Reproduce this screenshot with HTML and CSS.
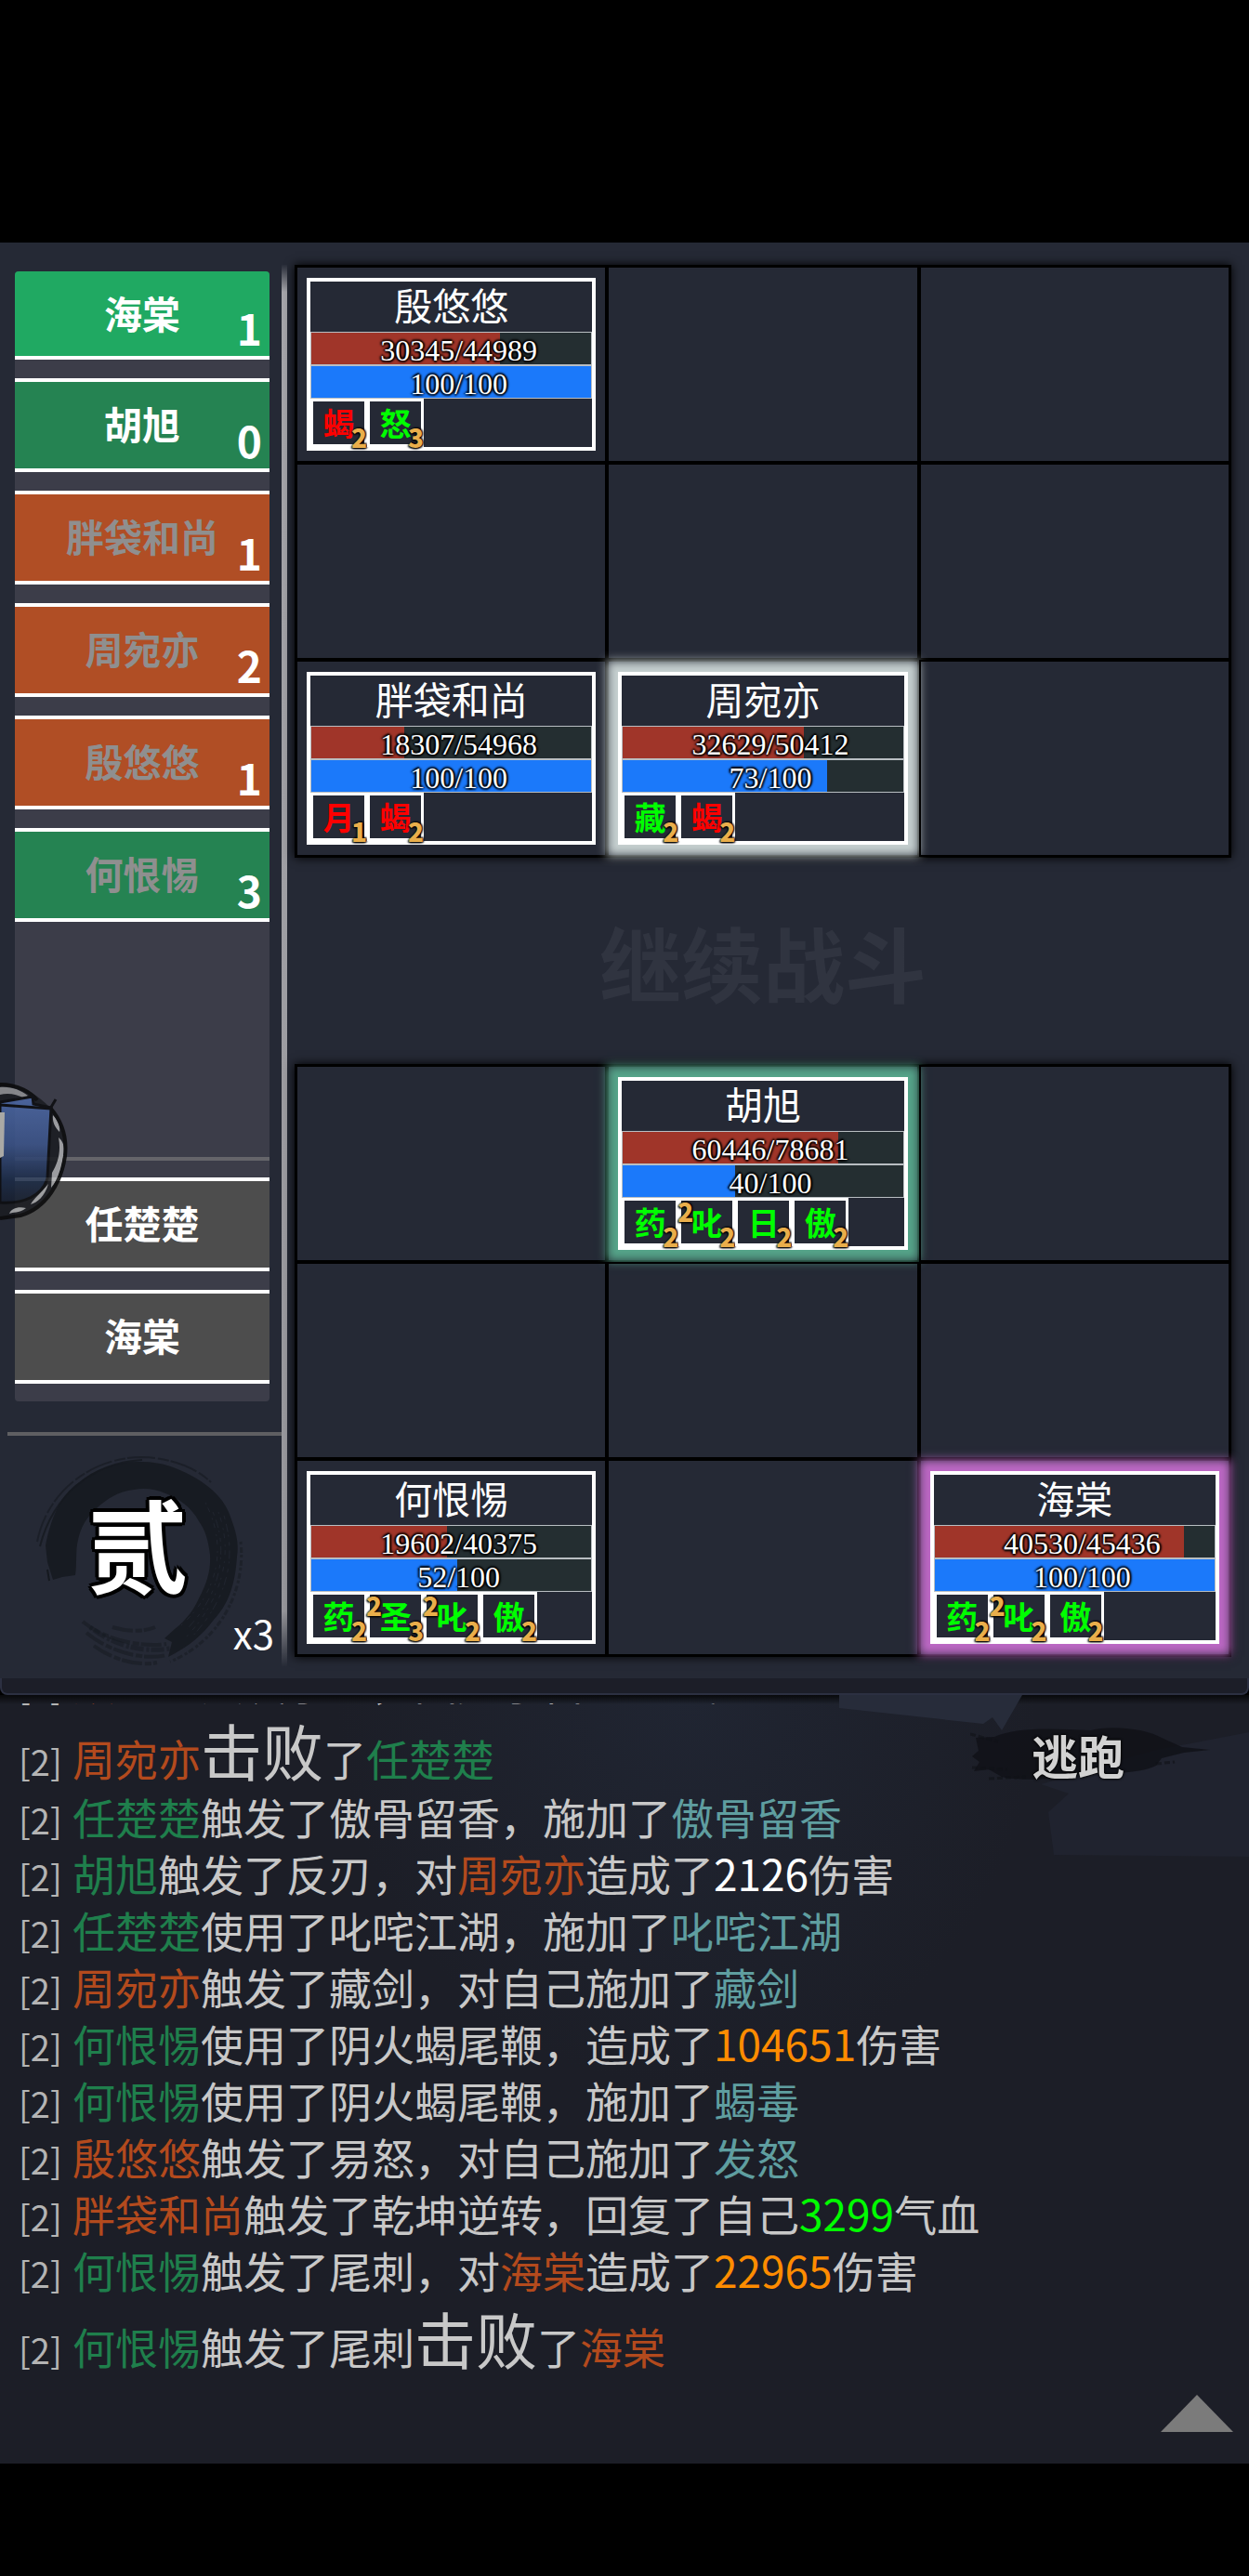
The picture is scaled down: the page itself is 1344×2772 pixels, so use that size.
FILE: index.html
```html
<!DOCTYPE html>
<html lang="zh-CN">
<head>
    <meta charset="UTF-8">
    <meta name="viewport" content="width=device-width, initial-scale=1.0">
    <title>战斗</title>
    <link rel="stylesheet" href="styles.css">
</head>
<body>

<main class="game">
    <section class="battle">
        <aside class="sidebar">
            <div class="queue">
                <div class="turn ally current">海棠<span class="turn-count">1</span></div>
                <div class="turn ally ready">胡旭<span class="turn-count">0</span></div>
                <div class="turn enemy">胖袋和尚<span class="turn-count">1</span></div>
                <div class="turn enemy">周宛亦<span class="turn-count">2</span></div>
                <div class="turn enemy">殷悠悠<span class="turn-count">1</span></div>
                <div class="turn ally">何恨惕<span class="turn-count">3</span></div>
                <div class="fallen">
                    <div class="turn dead">任楚楚</div>
                    <div class="turn dead">海棠</div>
                </div>
            </div>
            <div class="round">
                <svg class="round-ink" viewBox="0 0 226 226" fill="none" stroke="#15191f" aria-hidden="true">
                    <path d="M20 133 L14 114 L12 96 C18 66 28 42 47 29 C64 14 88 6 111 6 C134 5 154 12 171 22 C192 34 206 48 212 68 C218 84 220 96 218 108 C216 140 208 160 193 176 C180 194 164 206 144 216 L148 200 L140 196 L151 186 C164 176 172 164 177 153 C186 136 190 122 189 106 C187 90 184 80 177 70 C168 54 156 46 141 40 C130 35 118 34 107 36 C90 38 78 46 67 56 C56 66 50 76 47 90 C44 102 46 116 44 128 L30 130 Z" fill="#15191f" stroke="none" opacity=".85"/>
                    <path d="M3 92 C14 36 64 1 116 1 C150 2 176 14 190 28" stroke-width="2" stroke-dasharray="30 3 12 2" opacity=".6"/>
                    <path d="M6 97 C20 42 62 7 116 4" stroke-width="2" opacity=".8"/>
                    <path d="M14 122 L16 134" stroke-width="2"/>
                    <path d="M222 92 C228 146 198 200 146 221" stroke-width="3" stroke-dasharray="3 3 6 2" opacity=".5"/>
                    <path d="M192 60 C210 100 200 150 164 186 M204 64 C218 110 208 154 168 196" stroke="#252935" stroke-width="1" stroke-dasharray="4 5 9 3 2 6" opacity=".7"/>
                    <path d="M198 60 C214 104 204 152 162 196 M184 50 C206 92 202 142 158 182" stroke="#252935" stroke-width="1" stroke-dasharray="2 4 5 7" opacity=".7"/>
                    <path d="M56 190 C80 210 116 220 142 214 M52 178 C76 198 116 206 142 202 M64 204 C86 220 112 226 132 222 M84 184 C104 190 120 188 130 184" stroke-width="4" stroke-dasharray="22 3 7 2" opacity=".5"/>
                    <path d="M60 184 C84 203 116 212 146 207" stroke-width="5" stroke-dasharray="3 2 14 3" opacity=".45"/>
                </svg>
                <span class="round-name">贰</span>
                <span class="round-speed">x3</span>
            </div>
        </aside>

        <div class="board">
            <div class="field">
                <div class="cell">
                    <article class="unit">
                        <h2 class="unit-name">殷悠悠</h2>
                        <div class="bar hp"><i class="fill" style="width: 67.4%"></i><span>30345/44989</span></div>
                        <div class="bar mp"><i class="fill" style="width: 100%"></i><span>100/100</span></div>
                        <div class="buffs">
                            <div class="buff bad">蝎<b class="stack">2</b></div>
                            <div class="buff">怒<b class="stack">3</b></div>
                        </div>
                    </article>
                </div>
                <div class="cell"></div>
                <div class="cell"></div>
                <div class="cell"></div>
                <div class="cell"></div>
                <div class="cell"></div>
                <div class="cell">
                    <article class="unit">
                        <h2 class="unit-name">胖袋和尚</h2>
                        <div class="bar hp"><i class="fill" style="width: 33.3%"></i><span>18307/54968</span></div>
                        <div class="bar mp"><i class="fill" style="width: 100%"></i><span>100/100</span></div>
                        <div class="buffs">
                            <div class="buff bad">月<b class="stack">1</b></div>
                            <div class="buff bad">蝎<b class="stack">2</b></div>
                        </div>
                    </article>
                </div>
                <div class="cell">
                    <article class="unit glow-white">
                        <h2 class="unit-name">周宛亦</h2>
                        <div class="bar hp"><i class="fill" style="width: 64.7%"></i><span>32629/50412</span></div>
                        <div class="bar mp"><i class="fill" style="width: 73%"></i><span>73/100</span></div>
                        <div class="buffs">
                            <div class="buff">藏<b class="stack">2</b></div>
                            <div class="buff bad">蝎<b class="stack">2</b></div>
                        </div>
                    </article>
                </div>
                <div class="cell"></div>
            </div>

            <button class="continue" type="button">继续战斗</button>

            <div class="field">
                <div class="cell"></div>
                <div class="cell">
                    <article class="unit glow-green">
                        <h2 class="unit-name">胡旭</h2>
                        <div class="bar hp"><i class="fill" style="width: 76.8%"></i><span>60446/78681</span></div>
                        <div class="bar mp"><i class="fill" style="width: 40%"></i><span>40/100</span></div>
                        <div class="buffs">
                            <div class="buff">药<b class="stack">2</b></div>
                            <div class="buff"><b class="level">2</b>叱<b class="stack">2</b></div>
                            <div class="buff">日<b class="stack">2</b></div>
                            <div class="buff">傲<b class="stack">2</b></div>
                        </div>
                    </article>
                </div>
                <div class="cell"></div>
                <div class="cell"></div>
                <div class="cell"></div>
                <div class="cell"></div>
                <div class="cell">
                    <article class="unit">
                        <h2 class="unit-name">何恨惕</h2>
                        <div class="bar hp"><i class="fill" style="width: 48.5%"></i><span>19602/40375</span></div>
                        <div class="bar mp"><i class="fill" style="width: 52%"></i><span>52/100</span></div>
                        <div class="buffs">
                            <div class="buff">药<b class="stack">2</b></div>
                            <div class="buff"><b class="level">2</b>圣<b class="stack">3</b></div>
                            <div class="buff"><b class="level">2</b>叱<b class="stack">2</b></div>
                            <div class="buff">傲<b class="stack">2</b></div>
                        </div>
                    </article>
                </div>
                <div class="cell"></div>
                <div class="cell">
                    <article class="unit glow-pink">
                        <h2 class="unit-name">海棠</h2>
                        <div class="bar hp"><i class="fill" style="width: 89.2%"></i><span>40530/45436</span></div>
                        <div class="bar mp"><i class="fill" style="width: 100%"></i><span>100/100</span></div>
                        <div class="buffs">
                            <div class="buff">药<b class="stack">2</b></div>
                            <div class="buff"><b class="level">2</b>叱<b class="stack">2</b></div>
                            <div class="buff">傲<b class="stack">2</b></div>
                        </div>
                    </article>
                </div>
            </div>
        </div>

        <!-- floating shortcut docked to the left edge -->
        <svg class="float-ball" viewBox="0 0 76 150" aria-hidden="true">
            <defs>
                <linearGradient id="book" x1="0" y1="0" x2="0" y2="1">
                    <stop offset="0" stop-color="#4d69a6"/>
                    <stop offset=".45" stop-color="#3c5489"/>
                    <stop offset=".8" stop-color="#1c2b46"/>
                    <stop offset="1" stop-color="#18202f"/>
                </linearGradient>
            </defs>
            <circle cx="-1" cy="75" r="72" fill="#1b1d22"/>
            <path d="M0 6 C12 5 22 9 30 15 L26 18 C18 13 8 12 0 14 Z" fill="#909194"/>
            <path d="M57 36 C63 42 65 50 64 54 C60 50 56 44 57 36 Z M63 60 C70 66 70 74 67 86 C66 96 62 106 55 114 L56 98 C62 88 66 76 63 60 Z M52 110 C48 124 40 130 33 132 C36 126 44 120 52 110 Z M28 136 C20 142 14 140 10 142 C12 136 20 134 28 136 Z" fill="#a9aaac"/>
            <path d="M0 3 C20 3 34 12 40 20 M54 28 C68 44 72 62 70 80 C66 108 50 136 22 144 L0 147" fill="none" stroke="#0b0b0c" stroke-width="4"/>
            <path d="M0 22 L35 16 L36 24 L55 28 L51 104 C46 122 26 132 0 130 Z" fill="url(#book)" stroke="#0c0d10" stroke-width="3"/>
            <path d="M0 25 L54 29 L60 19" fill="none" stroke="#0c0d10" stroke-width="3"/>
            <path d="M0 33 L5 33 L4 80 L0 82 Z" fill="#bdbbb5"/>
        </svg>
    </section>

    <div class="divider"></div>

    <section class="log">
        <svg class="log-art" viewBox="0 0 1344 827" preserveAspectRatio="none" aria-hidden="true">
            <path d="M903 0 L1100 0 L1078 38 L1068 24 L1058 31 L903 14 Z" fill="#272c3a"/>
            <path d="M1344 40 L1344 174 L1134 172 L1128 126 L1150 106 L1120 96 L1240 60 Z" fill="#20232f"/>
        </svg>
        <ol class="log-lines">
            <li><span class="round-no">[2]</span><span class="enemy-name">殷悠悠</span>触发了血，回复了自己<span class="heal">50</span>气血</li>
            <li><span class="round-no">[2]</span><span class="enemy-name">周宛亦</span><span class="defeat">击败</span>了<span class="ally-name">任楚楚</span></li>
            <li><span class="round-no">[2]</span><span class="ally-name">任楚楚</span>触发了傲骨留香，施加了<span class="effect">傲骨留香</span></li>
            <li><span class="round-no">[2]</span><span class="ally-name">胡旭</span>触发了反刃，对<span class="enemy-name">周宛亦</span>造成了<span class="hit">2126</span>伤害</li>
            <li><span class="round-no">[2]</span><span class="ally-name">任楚楚</span>使用了叱咤江湖，施加了<span class="effect">叱咤江湖</span></li>
            <li><span class="round-no">[2]</span><span class="enemy-name">周宛亦</span>触发了藏剑，对自己施加了<span class="effect">藏剑</span></li>
            <li><span class="round-no">[2]</span><span class="ally-name">何恨惕</span>使用了阴火蝎尾鞭，造成了<span class="crit">104651</span>伤害</li>
            <li><span class="round-no">[2]</span><span class="ally-name">何恨惕</span>使用了阴火蝎尾鞭，施加了<span class="effect">蝎毒</span></li>
            <li><span class="round-no">[2]</span><span class="enemy-name">殷悠悠</span>触发了易怒，对自己施加了<span class="effect">发怒</span></li>
            <li><span class="round-no">[2]</span><span class="enemy-name">胖袋和尚</span>触发了乾坤逆转，回复了自己<span class="heal">3299</span>气血</li>
            <li><span class="round-no">[2]</span><span class="ally-name">何恨惕</span>触发了尾刺，对<span class="enemy-name">海棠</span>造成了<span class="crit">22965</span>伤害</li>
            <li><span class="round-no">[2]</span><span class="ally-name">何恨惕</span>触发了尾刺<span class="defeat">击败</span>了<span class="enemy-name">海棠</span></li>
        </ol>
        <button class="escape" type="button">
            <svg viewBox="0 0 260 64" aria-hidden="true">
                <path d="M6 14 L26 13 C50 2 90 4 130 6 C150 0 190 4 206 14 L228 24 L258 27 L230 30 L206 36 L200 44 C180 54 140 52 110 54 C80 60 50 60 34 56 L20 48 L4 50 L10 40 L2 34 L9 28 Z" fill="#101217" opacity=".85"/>
                <path d="M0 10 L30 18 M2 46 L40 48 M20 58 L60 56 M200 42 L220 40" stroke="#101217" stroke-width="3" stroke-dasharray="6 3" opacity=".6"/>
            </svg>
            <span>逃跑</span>
        </button>
        <button class="expand" type="button" aria-label="展开">
            <svg viewBox="0 0 78 40" aria-hidden="true"><path d="M39 0 L78 40 L0 40 Z" fill="#7b7b7b"/></svg>
        </button>
    </section>
</main>

</body>
</html>
```

FILE: styles.css
```css
* {
    box-sizing: border-box;
    margin: 0;
    padding: 0;
}
body {
    min-height: 100vh;
    padding: 261px 0 121px;
    background-color: #000;
    color: #fff;
    font-family: "Noto Sans CJK SC", sans-serif;
}
button {
    border: none;
    background: none;
    color: inherit;
    font-family: inherit;
    cursor: pointer;
}

/* battle area */
.battle {
    position: relative;
    display: grid;
    grid-template-columns: 317px 1fr;
    padding: 24px 19px 13px 0;
    background-color: #252935;
}
.sidebar {
    display: flex;
    flex-direction: column;
    margin-right: 8px;
    padding: 7px 0 0 8px;
    border-right: 6px solid #96969b;
    border-image: linear-gradient(transparent, #a5a5aa 2%, #96969b 96%, transparent) 1;
}
.queue {
    display: flex;
    flex-direction: column;
    gap: 20px;
    width: 274px;
    height: 1216px;
    margin-left: 8px;
    padding-bottom: 19px;
    border-radius: 4px;
    background-color: #3c3d49;
}
.turn {
    position: relative;
    height: 101px;
    border-top: 4px solid #fff;
    border-bottom: 4px solid #fff;
    font-size: 41px;
    font-weight: bold;
    line-height: 88px;
    text-align: center;
    color: #8f8f8f;
}
.turn.ally {
    background-color: #258352;
}
.turn.enemy {
    background-color: #b04e25;
}
.turn.current {
    height: 95px;
    border-top: none;
    border-radius: 4px 4px 0 0;
    background-color: #20a962;
}
.turn.current, .turn.ready, .turn.dead {
    color: #fff;
}
.turn.dead {
    background-color: #4d4d4d;
}
.turn-count {
    position: absolute;
    right: 8px;
    bottom: 4px;
    font-size: 46px;
    line-height: 54px;
    color: #fff;
}
.fallen {
    display: flex;
    flex-direction: column;
    gap: 20px;
    margin-top: auto;
    padding-top: 18px;
    border-top: 4px solid #65656a;
}
.round {
    position: relative;
    display: flex;
    flex: 1;
    justify-content: center;
    margin-top: 33px;
    padding-top: 22px;
    border-top: 4px solid #5f5f62;
}
.round-ink {
    width: 226px;
    height: 226px;
    margin-right: 12px;
}
.round-name {
    position: absolute;
    top: 36px;
    left: 86px;
    font-size: 108px;
    font-weight: bold;
    line-height: 156px;
    text-shadow: 4px 0 #000, -4px 0 #000, 0 4px #000, 0 -4px #000, 3px 3px #000, -3px -3px #000, 3px -3px #000, -3px 3px #000;
}
.round-speed {
    position: absolute;
    right: 8px;
    bottom: 6px;
    font-size: 42px;
    line-height: 60px;
}

/* fields */
.board {
    display: flex;
    flex-direction: column;
    padding-bottom: 10px;
}
.field {
    display: grid;
    grid-template-columns: repeat(3, 1fr);
    grid-auto-rows: 212px;
    border: 1px solid #000;
    box-shadow: 0 0 10px #000;
    background-color: #252935;
}
.cell {
    padding: 11px 10px;
    border: 2px solid #000;
}
.unit {
    display: flex;
    flex-direction: column;
    height: 100%;
    border: 4px solid #fff;
    background-color: #252935;
}
.glow-white {
    box-shadow: 0 0 10px 12px #c5cfcf;
}
.glow-green {
    box-shadow: 0 0 10px 12px #55a489;
}
.glow-pink {
    box-shadow: 0 0 10px 12px #bc68c4;
}
.unit-name {
    height: 54px;
    font-size: 41px;
    font-weight: 400;
    line-height: 48px;
    text-align: center;
}
.bar {
    position: relative;
    height: 36px;
    border: 1px solid #b9bec2;
    background-color: #242e31;
    font-family: "Liberation Serif", serif;
    font-size: 32px;
    line-height: 39px;
    text-align: center;
    text-shadow: 2px 0 2px #000, -2px 0 2px #000, 0 2px 2px #000, 0 -2px 2px #000;
}
.bar .fill {
    position: absolute;
    top: 0;
    left: 0;
    height: 100%;
}
.bar span {
    position: relative;
    padding-left: 16px;
}
.hp .fill {
    background-color: #a03529;
}
.mp .fill {
    background-color: #1b79fa;
}
.buffs {
    display: flex;
    flex: 1;
}
.buff {
    position: relative;
    width: 61px;
    border: 3px solid #fff;
    font-size: 34px;
    font-weight: bold;
    line-height: 46px;
    text-align: center;
    color: #0f0;
}
.buff.bad {
    color: #f00;
}
.stack, .level {
    position: absolute;
    font-size: 28px;
    line-height: 28px;
    color: #e9ae4b;
    text-shadow: 1px 1px 2px #000, -1px 1px 2px #000, 1px -1px 2px #000;
}
.stack {
    right: -3px;
    bottom: -6px;
}
.level {
    top: -3px;
    left: -4px;
}
.continue {
    height: 222px;
    font-size: 88px;
    font-weight: bold;
    line-height: 124px;
    color: #303440;
}
.float-ball {
    position: absolute;
    top: 903px;
    left: 0;
    width: 76px;
    height: 150px;
    opacity: 0.88;
}

/* strip between battle and log */
.divider {
    height: 18px;
    border: solid #2c3042;
    border-width: 0 2px 2px;
    border-radius: 0 0 8px 8px;
    background-color: #1c1e28;
}

/* battle log */
.log {
    position: relative;
    height: 827px;
    padding-top: 9px;
    background-color: #1c1e27;
    background-image: linear-gradient(#08090b, transparent 10px), radial-gradient(ellipse at 55% 0, #202532, #1c1e27 36%);
}
.log-art {
    position: absolute;
    top: 0;
    left: 0;
    width: 100%;
    height: 100%;
}
.log-lines {
    position: relative;
    padding-left: 20px;
    overflow: hidden;
    list-style: none;
    font-size: 46px;
    line-height: 61px;
    white-space: nowrap;
    color: #c8c8c8;
}
.log-lines li:first-child {
    margin-top: -54px;
}
.round-no {
    display: inline-block;
    width: 58px;
    font-size: 38px;
    line-height: 38px;
    color: #b4b4b4;
}
.ally-name {
    color: #1f7f4c;
}
.enemy-name {
    color: #b34a1d;
}
.effect {
    color: #5f9ea0;
}
.hit {
    color: #fff;
}
.crit {
    color: #ff8c00;
}
.heal {
    color: #0f0;
}
.defeat {
    font-size: 66px;
    line-height: 84px;
}
.escape {
    position: absolute;
    top: 32px;
    right: 40px;
    width: 260px;
    height: 64px;
    font-size: 50px;
    font-weight: bold;
    line-height: 54px;
    color: #d2d2d2;
    text-shadow: 0 0 3px #000, 0 0 3px #000;
}
.escape svg {
    position: absolute;
    top: 0;
    left: 0;
    width: 100%;
    height: 100%;
}
.escape span {
    position: relative;
    right: 14px;
}
.expand {
    position: absolute;
    right: 17px;
    bottom: 34px;
    width: 78px;
    height: 40px;
}
.expand svg {
    display: block;
}
```
